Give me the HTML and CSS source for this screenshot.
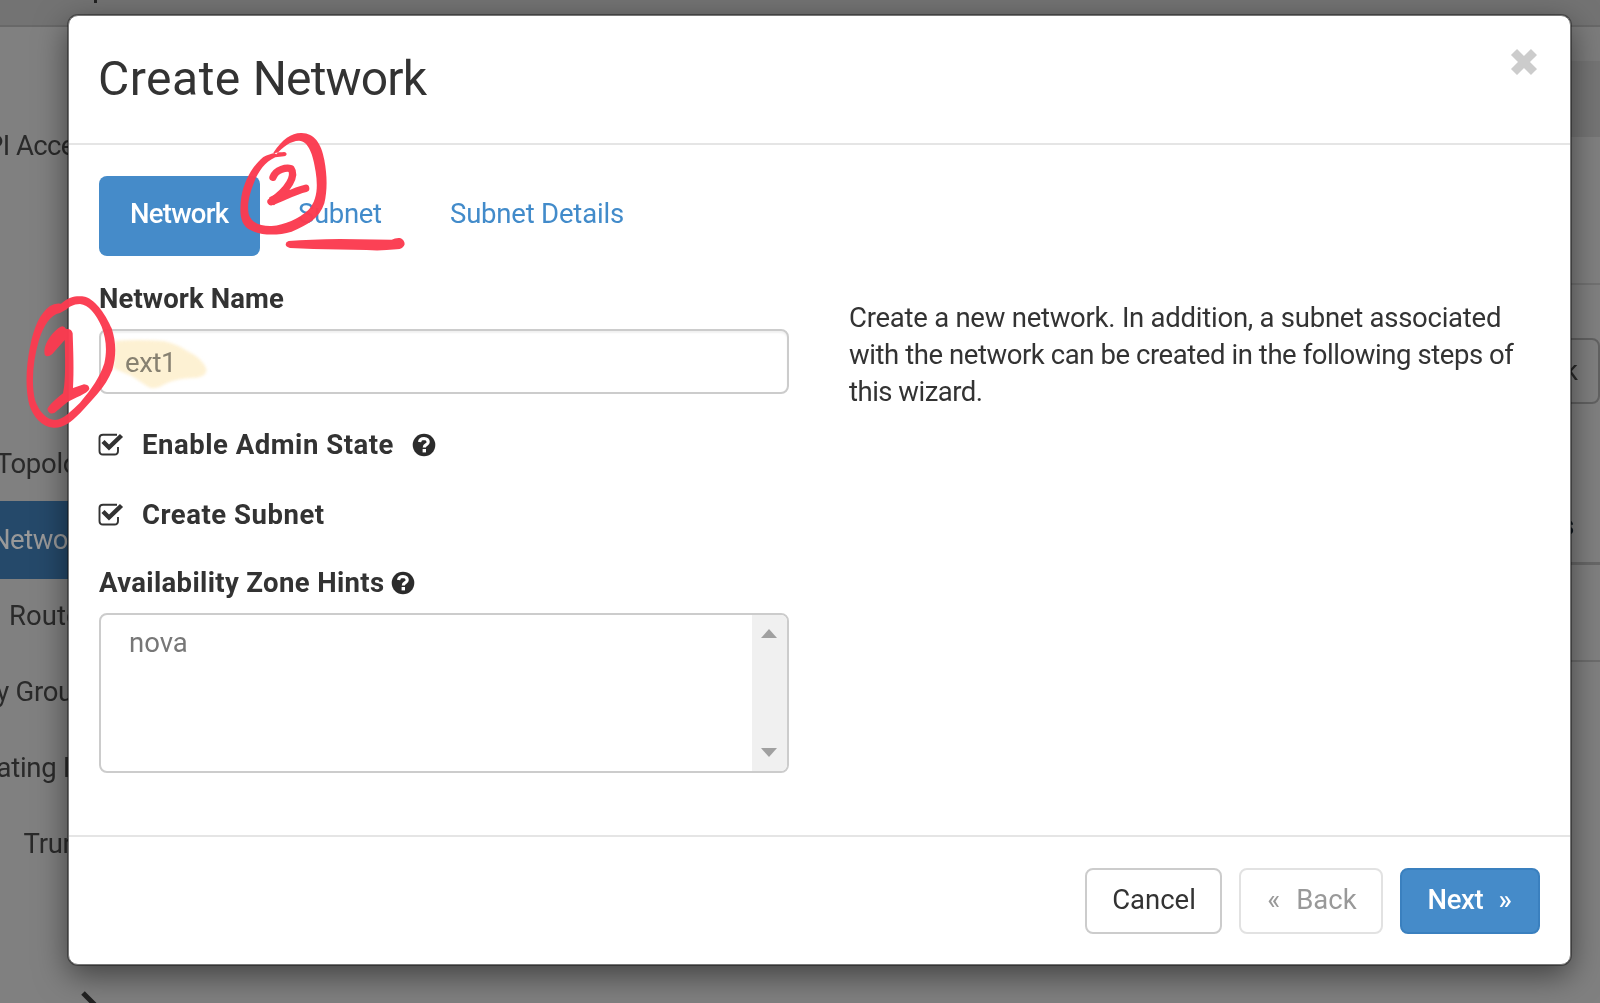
FILE: index.html
```html
<!DOCTYPE html>
<html lang="en">
<head>
<meta charset="utf-8">
<title>Create Network</title>
<link rel="stylesheet" href="styles.css">
</head>
<body>
<div class="page">
  <header class="topbar"><span class="mark"></span></header>
  <div class="columns">
    <nav class="sidebar">
      <div class="side-item api">API Access</div>
      <div class="side-item">Network Topology</div>
      <div class="side-item active">Networks</div>
      <div class="side-item routers">Routers</div>
      <div class="side-item groups">Security Groups</div>
      <div class="side-item floating">Floating IPs</div>
      <div class="side-item trunks">Trunks</div>
      <svg class="chevron" width="40" height="40" viewBox="0 0 40 40"><path d="M3 3 L20 20 L3 37" fill="none" stroke="#222" stroke-width="5"/></svg>
    </nav>
    <section class="content">
      <div class="crumb"></div>
      <div class="title-row"></div>
      <div class="toolbar"><span class="ghost-btn">k</span></div>
      <div class="table-head">s</div>
      <div class="table-row"></div>
    </section>
  </div>
</div>

<div class="overlay">
  <div class="modal">
    <div class="modal-header">
      <h3><span class="w1">Create</span> <span class="w2">Network</span></h3>
      <svg class="close" width="28" height="28" viewBox="0 0 28 28"><path d="M4 4 L24 24 M24 4 L4 24" stroke="#ccc" stroke-width="8.5" fill="none"/></svg>
    </div>
    <div class="modal-body">
      <div class="tabs">
        <a class="tab current">Network</a>
        <a class="tab subnet">Subnet</a>
        <a class="tab details">Subnet Details</a>
      </div>
      <div class="form-row">
        <div class="fields">
          <label class="label name">Network Name</label>
          <div class="input"><span>ext1</span></div>
          <div class="check">
            <svg class="box" width="26" height="24" viewBox="0 0 26 24"><path d="M19 1.7H5Q1.5 1.7 1.5 5V18Q1.5 21.5 5 21.5H16.5Q20 21.5 20 18V14" fill="none" stroke="#333" stroke-width="1.9"/><path d="M5 8.5L11 14.500L23.500 2.500" fill="none" stroke="#333" stroke-width="4.4"/></svg>
            <span class="label enable">Enable Admin State</span>
            <svg class="help" width="24" height="24" viewBox="0 0 24 24"><circle cx="12" cy="12" r="11.3" fill="#2b2b2b"/><path d="M7.500 9Q8 5.500 12 5.500Q16.200 5.700 16.200 9Q16.200 10.700 14.200 11.700Q12.300 12.700 12.300 14.500" fill="none" stroke="#fff" stroke-width="3.2"/><path d="M10.600 16h3.400v3.400h-3.400z" fill="#fff"/></svg>
          </div>
          <div class="check second">
            <svg class="box" width="26" height="24" viewBox="0 0 26 24"><path d="M19 1.7H5Q1.5 1.7 1.5 5V18Q1.5 21.5 5 21.5H16.5Q20 21.5 20 18V14" fill="none" stroke="#333" stroke-width="1.9"/><path d="M5 8.5L11 14.500L23.500 2.500" fill="none" stroke="#333" stroke-width="4.4"/></svg>
            <span class="label create">Create Subnet</span>
          </div>
          <div class="zone">
            <span class="label hints">Availability Zone Hints</span>
            <svg class="help" width="24" height="24" viewBox="0 0 24 24"><circle cx="12" cy="12" r="11.3" fill="#2b2b2b"/><path d="M7.500 9Q8 5.500 12 5.500Q16.200 5.700 16.200 9Q16.200 10.700 14.200 11.700Q12.300 12.700 12.300 14.500" fill="none" stroke="#fff" stroke-width="3.2"/><path d="M10.600 16h3.400v3.400h-3.400z" fill="#fff"/></svg>
          </div>
          <div class="listbox">
            <span class="option">nova</span>
            <div class="scroll"><i class="up"></i><i class="down"></i></div>
          </div>
        </div>
        <p class="help-text"><span class="l1">Create a new network. In addition, a subnet associated</span><br><span class="l2">with the network can be created in the following steps of</span><br><span class="l3">this wizard.</span></p>
      </div>
    </div>
    <div class="modal-footer">
      <button class="btn cancel">Cancel</button>
      <button class="btn back"><span class="arrow">«</span>Back</button>
      <button class="btn next">Next<span class="arrow">»</span></button>
    </div>
  </div>
</div>

<svg class="ink" viewBox="0 0 4800 3009">
  <defs><filter id="soft"><feGaussianBlur stdDeviation="5"/></filter></defs>
  <path class="marker" filter="url(#soft)" d="M345 1022Q420 1017 492 1023Q530 1032 560 1052Q610 1075 620 1110Q618 1130 590 1133Q520 1135 490 1155Q462 1173 440 1158L395 1128L340 1105Z"/>
  <g class="pen">
    <path d="M820 458C848 417 875 398 905 399C943 400 964 430 973 480C982 530 982 570 973 610C958 655 925 674 875 695C830 708 775 708 742 685C718 665 719 630 724 590C732 545 755 500 790 471C815 458 838 457 852 456C863 457 862 468 852 469L826 472C795 485 775 515 763 545C747 585 741 615 746 642C755 672 785 679 815 678C855 675 895 657 925 630C952 600 954 560 947 515C940 465 925 422 897 422C872 423 850 439 829 463Z"/>
    <path d="M183 911C210 888 230 887 255 890C290 900 320 950 335 985C348 1025 350 1065 337 1110C315 1165 275 1200 240 1240C210 1270 188 1285 160 1283C125 1280 100 1252 88 1215C75 1165 78 1100 90 1040C102 980 120 940 150 918Q165 908 183 911ZM180 939C150 945 132 975 117 1020C99 1080 93 1150 105 1200C117 1235 140 1260 165 1260C190 1258 215 1232 240 1208C275 1168 300 1130 313 1090C322 1050 318 1015 305 980C288 940 265 915 240 912C220 912 205 922 200 928Z"/>
    <path d="M133 1052C135 1025 160 992 182 980Q192 976 198 987Q215 985 218 1000C220 1060 222 1110 219 1164L252 1153Q268 1154 268 1167C262 1182 225 1192 200 1208L164 1238Q147 1246 142 1228Q145 1215 189 1180C197 1150 196 1080 194 1020L157 1062Q142 1074 134 1064Z"/>
    <path class="line" stroke-width="22" d="M819 532C828 507 860 502 873 506C888 527 867 568 813 605C850 594 875 575 917 565"/>
    <path d="M866 723Q930 718 1020 717L1175 719Q1186 713 1200 714Q1214 719 1214 733Q1210 748 1190 748Q1140 753 1100 750L940 747L870 744Q857 741 857 733Q857 726 866 723Z"/>
    <path d="M808 592L855 570L860 578L822 616L808 612Z"/>
  </g>
</svg>
</body>
</html>
```
FILE: styles.css
```css
* { box-sizing: border-box; }
body {
  margin: 0;
  width: 1600px;
  height: 1003px;
  overflow: hidden;
  position: relative;
  font: 27.5px/36px Roboto, "Liberation Sans", sans-serif;
  color: #333;
  background: #808080;
}

/* dimmed page behind the dialog */
.page { height: 1003px; overflow: hidden; display: flex; flex-direction: column; color: #2a2a2a; }
.topbar { height: 27px; flex: none; background: #737373; border-bottom: 2px solid #686868; padding-left: 94px; }
.mark { display: block; width: 3px; height: 3px; background: #222; }
.columns { flex: 1; display: flex; justify-content: space-between; }
.sidebar { width: 106px; overflow: hidden; padding-top: 81px; }
.side-item { height: 76px; display: flex; align-items: center; justify-content: flex-end; white-space: nowrap; letter-spacing: -.3px; }
.side-item.api { margin-bottom: 242px; letter-spacing: -.6px; padding-right: 4px; }
.side-item.active { height: 78px; margin: -1px 0; background: #25496a; color: #999; letter-spacing: -.5px; padding-right: 2px; }
.side-item.routers { padding-right: 2px; letter-spacing: 0; }
.side-item.groups { padding-right: 4px; }
.side-item.floating { padding-right: 5px; }
.side-item.trunks { padding-right: 1px; }
.chevron { display: block; margin: 108px 0 0 80px; }
.content { width: 60px; }
.crumb { height: 110px; background: linear-gradient(#7c7c7c 34px, #757575 34px); }
.title-row { height: 148px; border-bottom: 2px solid #727272; }
.toolbar { height: 172px; padding-top: 53px; }
.ghost-btn { display: flex; align-items: center; height: 66px; padding-left: 22px; border: 2px solid #626262; border-radius: 8px; }
.table-head { height: 108px; padding: 51px 0 0 20px; font-weight: 700; border-bottom: 3px solid #686868; color: #111a22; }
.table-row { height: 97px; border-bottom: 2px solid #6d6d6d; }

/* dialog */
.overlay { position: absolute; inset: 0; padding: 15px 29px 38px 68px; }
.modal {
  height: 950px;
  display: flex;
  flex-direction: column;
  background: #fff;
  border: 1px solid #777;
  border-radius: 10px;
  box-shadow: 0 0 0 1px rgba(0,0,0,.35), 0 10px 32px rgba(0,0,0,.5);
}
.modal-header { height: 129px; flex: none; display: flex; justify-content: space-between; padding: 32px 32px 0 29px; border-bottom: 2px solid #e5e5e5; }
h3 { margin: 0; font-size: 48px; line-height: 62px; font-weight: 400; }
.w1 { letter-spacing: .5px; }
.w2 { letter-spacing: -.85px; }
.close { display: block; }
.modal-body { flex: 1; padding: 31px 30px 0; }
.tabs { display: flex; height: 80px; color: #428bca; }
.tab { padding: 20px 0 0 31px; white-space: nowrap; }
.tab.current { width: 161px; background: #458bc9; border-radius: 8px; color: #fff; font-weight: 500; letter-spacing: -.75px; }
.tab.subnet { padding-left: 38px; width: 151px; letter-spacing: -.35px; }
.tab.details { padding-left: 39px; letter-spacing: -.2px; }
.form-row { display: flex; }
.fields { width: 689.5px; padding-top: 25px; }
.label { font-weight: 700; white-space: nowrap; }
.label.name { display: block; letter-spacing: .1px; }
.label.enable, .label.create { letter-spacing: .53px; }
.label.hints { letter-spacing: .35px; }
.input { height: 65px; margin: 12px 0 0; padding: 14px 24px; border: 2px solid #ccc; border-radius: 8px; color: #888; letter-spacing: -.4px; box-shadow: inset 0 2px 2px rgba(0,0,0,.06); }
.check { display: flex; align-items: center; height: 36px; margin-top: 33px; }
.check .box { margin: 0 18px 0 -1px; }
.check .help { margin-left: 18px; }
.check.second { margin-top: 34px; }
.zone { display: flex; align-items: center; height: 36px; margin-top: 32px; }
.zone .help { margin-left: 7px; }
.listbox { height: 160px; margin-top: 12px; display: flex; justify-content: space-between; border: 2px solid #ccc; border-radius: 8px; overflow: hidden; color: #777; }
.option { padding: 10px 0 0 28px; }
.scroll { width: 35px; background: #f0f0f0; display: flex; flex-direction: column; justify-content: space-between; align-items: center; padding: 14px 1px 14px 0; }
.up, .down { border: 8px solid transparent; border-top: 0; border-bottom: 9px solid #a0a0a0; }
.down { border-bottom: 0; border-top: 9px solid #a0a0a0; }
.help-text { margin: 43px 0 0 60.5px; line-height: 37px; white-space: nowrap; }
.l1 { letter-spacing: -.25px; }
.l2 { letter-spacing: -.43px; }
.l3 { letter-spacing: -.5px; }
.modal-footer { height: 129px; flex: none; display: flex; justify-content: flex-end; gap: 17px; padding: 31px 30px 0; border-top: 2px solid #e5e5e5; }
.btn { height: 66px; padding: 0 0 2px; font: inherit; color: #333; background: #fff; border: 2px solid #ccc; border-radius: 8px; white-space: nowrap; }
.cancel { width: 137px; padding-left: 1px; }
.back { width: 144px; padding-left: 2px; color: #999; border-color: #e2e2e2; }
.next { width: 140px; color: #fff; background: #458bc9; border-color: #3a80bf; font-weight: 500; letter-spacing: -.3px; padding-right: 1px; }
.back .arrow { margin-right: 16px; }
.next .arrow { margin-left: 15px; }

/* hand-drawn annotations */
.ink { position: absolute; inset: 0; width: 1600px; height: 1003px; pointer-events: none; }
.pen { fill: #fb3b50; fill-rule: evenodd; opacity: .97; }
.line { fill: none; stroke: #fb3b50; stroke-linecap: round; stroke-linejoin: round; }
.marker { fill: #fdebc0; mix-blend-mode: multiply; opacity: .7; }
```
